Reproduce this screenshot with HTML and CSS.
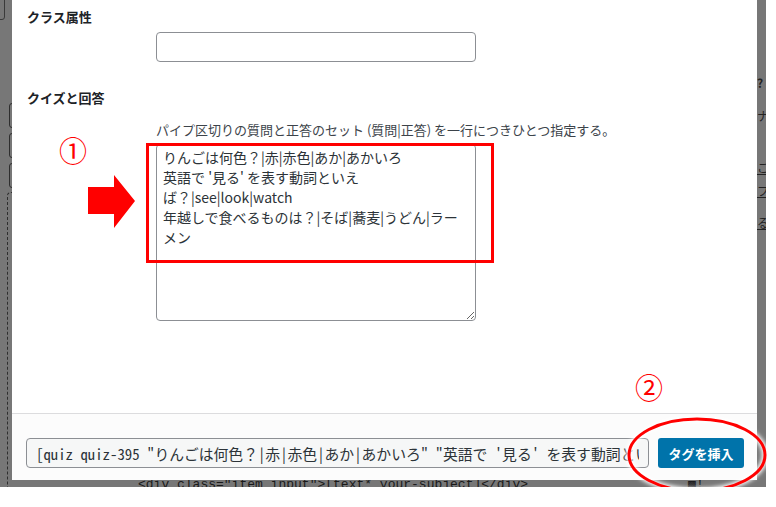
FILE: index.html
```html
<!DOCTYPE html>
<html lang="ja">
<head>
  <meta charset="UTF-8" />
  <title>フォームタグ生成: クイズ</title>
  <link rel="stylesheet" href="styles.css">
</head>
<body>
  <div class="screen">
    <!-- editor behind the overlay -->
    <div class="behind">
      <span class="ghost-box top"></span>
      <span class="ghost-edge e1"></span>
      <span class="ghost-edge e2"></span>
      <span class="ghost-edge e3"></span>
      <span class="ghost-dash"></span>
      <span class="ghost-char q">?</span>
      <span class="ghost-char na">ナ</span>
      <span class="ghost-char c1">こ</span>
      <span class="ghost-char c2">フ</span>
      <span class="ghost-char c3">る</span>
      <div class="ghost-code">&lt;div class="item input"&gt;[text* your-subject]&lt;/div&gt;<span class="ghost-icon">▩!</span></div>
    </div>

    <div class="modal">
      <div class="modal-body">
        <h3 class="field-title">クラス属性</h3>
        <div class="field">
          <input type="text" class="text-input" />
        </div>

        <h3 class="field-title second">クイズと回答</h3>
        <div class="field">
          <p class="description">パイプ区切りの質問と正答のセット (質問|正答) を一行につきひとつ指定する。</p>
          <textarea class="qa-input">りんごは何色？|赤|赤色|あか|あかいろ
英語で '見る' を表す動詞といえば？|see|look|watch
年越しで食べるものは？|そば|蕎麦|うどん|ラーメン</textarea>
        </div>
      </div>

      <div class="modal-footer">
        <input type="text" class="tag-output" readonly value="[quiz quiz-395 &quot;りんごは何色？|赤|赤色|あか|あかいろ&quot; &quot;英語で '見る' を表す動詞といえば？|see|look|watch&quot; &quot;年越しで食べるものは？|そば|蕎麦|うどん|ラーメン&quot;]" />
        <button class="insert-btn">タグを挿入</button>
      </div>
    </div>

    <!-- annotations -->
    <span class="mark-box"></span>
    <span class="mark-num n1">①</span>
    <span class="mark-num n2">②</span>
    <svg class="mark-arrow" width="50" height="56" viewBox="0 0 50 56">
      <polygon points="0,12 26,12 26,0 47,26 26,53 26,39 0,39" fill="#ff0000" />
    </svg>
    <svg class="mark-ellipse" width="148" height="84" viewBox="0 0 148 84">
      <ellipse cx="74" cy="42" rx="68" ry="36" fill="none" stroke="#ff0000" stroke-width="3" />
    </svg>
  </div>
</body>
</html>
```

FILE: styles.css
```css
* { box-sizing: border-box; }

body {
  margin: 0;
  background: #ffffff;
  font-family: "Noto Sans CJK JP", "Noto Sans", sans-serif;
  color: #1d2327;
}

.screen {
  position: relative;
  width: 766px;
  height: 487px;
  background: #777777;
}

/* editor page behind the dialog */
.behind {
  position: absolute;
  inset: 0;
  overflow: hidden;
}

.ghost-box.top {
  position: absolute;
  left: -4px;
  top: -4px;
  width: 9px;
  height: 24px;
  border: 1px solid #3a3a3a;
  border-radius: 3px;
}

.ghost-edge {
  position: absolute;
  left: 9px;
  width: 8px;
  height: 25px;
  border: 1px solid #2e2e2e;
  border-radius: 3px;
}
.ghost-edge.e1 { top: 103px; }
.ghost-edge.e2 { top: 133px; }
.ghost-edge.e3 { top: 163px; }

.ghost-dash {
  position: absolute;
  left: 7px;
  top: 192px;
  width: 8px;
  height: 300px;
  border-left: 1px dashed #2e2e2e;
  border-top: 1px dashed #2e2e2e;
  border-top-left-radius: 4px;
}

.ghost-char {
  position: absolute;
  left: 757px;
  font-size: 12px;
  line-height: 16px;
  color: #222;
}
.ghost-char.q { top: 75px; font-weight: 700; }
.ghost-char.na { top: 108px; }
.ghost-char.c1 { top: 160px; text-decoration: underline; }
.ghost-char.c2 { top: 183px; text-decoration: underline; }
.ghost-char.c3 { top: 215px; text-decoration: underline; }

.ghost-code {
  position: absolute;
  left: 138px;
  top: 477px;
  font-family: "Liberation Mono", monospace;
  font-size: 13px;
  line-height: 16px;
  color: #1a1a1a;
  white-space: pre;
}

.ghost-icon {
  margin-left: 160px;
}

/* dialog */
.modal {
  position: absolute;
  left: 12px;
  top: 0;
  width: 745px;
  height: 480px;
  background: #ffffff;
  display: flex;
  flex-direction: column;
}

.modal-body {
  flex: 1;
  padding: 8px 15px 0;
}

.field-title {
  margin: 0;
  font-size: 13px;
  line-height: 18px;
  font-weight: 700;
  color: #1d2327;
}

.field-title.second {
  margin-top: 27px;
}

.field {
  margin-left: 129px;
}

.text-input {
  display: block;
  margin-top: 6px;
  width: 320px;
  height: 30px;
  border: 1px solid #8c8f94;
  border-radius: 4px;
  background: #fff;
}

.description {
  margin: 14px 0 5px;
  font-size: 13px;
  line-height: 18px;
  color: #3c434a;
  white-space: nowrap;
}

.qa-input {
  display: block;
  width: 320px;
  height: 177px;
  margin: 0;
  padding: 2px 6px;
  border: 1px solid #8c8f94;
  border-radius: 4px;
  font-family: "Noto Sans CJK JP", "Noto Sans", sans-serif;
  font-size: 14px;
  line-height: 20px;
  color: #2c3338;
  overflow: hidden;
}

.modal-footer {
  height: 67px;
  border-top: 1px solid #dcdcde;
  background: #fcfcfc;
  display: flex;
  align-items: flex-start;
  gap: 9px;
  padding: 24px 13px 0 14px;
}

.tag-output {
  width: 623px;
  height: 30px;
  padding: 0 9px;
  border: 1px solid #8c8f94;
  border-radius: 4px;
  background: #f6f7f7;
  font-family: "Noto Sans Mono CJK JP", "Liberation Mono", monospace;
  font-size: 14.8px;
  color: #2c3338;
}

.insert-btn {
  width: 86px;
  height: 30px;
  border: none;
  border-radius: 3px;
  background: #0073aa;
  color: #ffffff;
  font-family: "Noto Sans CJK JP", sans-serif;
  font-size: 13px;
  font-weight: 700;
  cursor: pointer;
}

/* red annotations */
.mark-box {
  position: absolute;
  left: 146px;
  top: 143px;
  width: 348px;
  height: 120px;
  border: 3px solid #ff0000;
}

.mark-num {
  position: absolute;
  font-size: 28px;
  line-height: 28px;
  color: #ff0000;
  font-weight: 400;
}
.mark-num.n1 { left: 59px; top: 136px; }
.mark-num.n2 { left: 635px; top: 373px; }

.mark-arrow {
  position: absolute;
  left: 88px;
  top: 175px;
}

.mark-ellipse {
  position: absolute;
  left: 623px;
  top: 413px;
  filter: drop-shadow(0 0 2px #ffffff) drop-shadow(0 0 2px #ffffff);
}
```
